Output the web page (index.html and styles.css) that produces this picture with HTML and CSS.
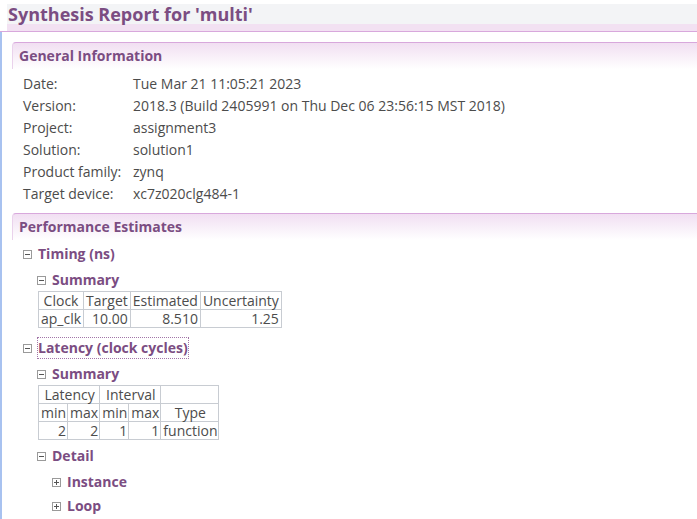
FILE: index.html
```html
<!DOCTYPE html>
<html>
<head>
<meta charset="utf-8">
<link rel="stylesheet" href="styles.css">
</head>
<body>
<div class="titlebar"><h1 class="title">Synthesis Report for 'multi'</h1></div>
<div class="page">
  <h2 class="section first">General Information</h2>
  <div class="info">
    <div class="row"><span class="k">Date:</span><span class="v">Tue Mar 21 11:05:21 2023</span></div>
    <div class="row"><span class="k">Version:</span><span class="v">2018.3 (Build 2405991 on Thu Dec 06 23:56:15 MST 2018)</span></div>
    <div class="row"><span class="k">Project:</span><span class="v">assignment3</span></div>
    <div class="row"><span class="k">Solution:</span><span class="v">solution1</span></div>
    <div class="row"><span class="k">Product family:</span><span class="v">zynq</span></div>
    <div class="row"><span class="k">Target device:</span><span class="v">xc7z020clg484-1</span></div>
  </div>
  <h2 class="section">Performance Estimates</h2>
  <div class="tree l1">
    <div class="node"><span class="tog minus"></span><span class="lbl">Timing (ns)</span></div>
    <div class="tree l2">
      <div class="node"><span class="tog minus"></span><span class="lbl">Summary</span></div>
      <table class="grid">
        <tr><td class="c">Clock</td><td class="c">Target</td><td class="c">Estimated</td><td class="c">Uncertainty</td></tr>
        <tr><td>ap_clk</td><td class="r">10.00</td><td class="r">8.510</td><td class="r">1.25</td></tr>
      </table>
    </div>
    <div class="node n-lat"><span class="tog minus"></span><span class="lbl focus">Latency (clock cycles)</span></div>
    <div class="tree l2">
      <div class="node"><span class="tog minus"></span><span class="lbl">Summary</span></div>
      <table class="grid lat">
        <tr><td class="c" colspan="2">Latency</td><td class="c" colspan="2">Interval</td><td></td></tr>
        <tr><td class="c">min</td><td class="c">max</td><td class="c">min</td><td class="c">max</td><td class="c">Type</td></tr>
        <tr><td class="r">2</td><td class="r">2</td><td class="r">1</td><td class="r">1</td><td>function</td></tr>
      </table>
      <div class="node n-det"><span class="tog minus"></span><span class="lbl">Detail</span></div>
      <div class="tree l3">
        <div class="node n-inst"><span class="tog plus"></span><span class="lbl">Instance</span></div>
        <div class="node n-loop"><span class="tog plus"></span><span class="lbl">Loop</span></div>
      </div>
    </div>
  </div>
</div>
</body>
</html>
```
FILE: styles.css
```css
html, body {
  margin: 0;
  padding: 0;
  background: #ffffff;
  font-family: "Open Sans", "Noto Sans", sans-serif;
  font-size: 14px;
  color: #4c4c4c;
}
.titlebar {
  padding-top: 4px;
  border-bottom: 1px solid #d8a8dc;
}
.title {
  margin: 0 0 0 7px;
  height: 20px;
  line-height: 20px;
  padding-left: 1px;
  background: #f3f4f6;
  color: #7b4d82;
  font-size: 18px;
  font-weight: bold;
  border-bottom: 7px solid #f2e1f2;
}
.page {
  border-left: 2px solid #a8c2f0;
  padding: 10px 0 0 10px;
  min-height: 487px;
  box-sizing: border-box;
}
.section {
  margin: 8px 0 0 0;
  height: 26px;
  line-height: 25px;
  padding-left: 6px;
  border-top: 1px solid #d8a8dc;
  border-left: 1px solid #ead2ec;
  border-top-left-radius: 4px;
  background: linear-gradient(#f1dff2, #ffffff);
  color: #7b4d82;
  font-size: 14px;
  font-weight: bold;
}
.section.first { margin-top: 0; }
.info {
  padding: 4px 0 0 11px;
}
.row {
  display: flex;
  height: 22px;
  line-height: 22px;
}
.k { width: 110px; }
.tree.l1 { padding: 4px 0 0 11px; }
.tree.l2 { padding-left: 14px; }
.tree.l3 { padding-left: 15px; }
.node {
  display: flex;
  align-items: center;
  height: 20px;
  margin-bottom: 6px;
}
.tog {
  width: 7px;
  height: 7px;
  border: 1px solid #9a9a9a;
  margin-right: 6px;
  position: relative;
  flex: none;
}
.tog::before {
  content: "";
  position: absolute;
  left: 1px;
  top: 3px;
  width: 5px;
  height: 1px;
  background: #555;
}
.tog.plus::after {
  content: "";
  position: absolute;
  left: 3px;
  top: 1px;
  width: 1px;
  height: 5px;
  background: #555;
}
.lbl {
  color: #7b4d82;
  font-weight: bold;
  font-size: 14px;
  line-height: 20px;
}
.focus { outline: 1px dotted #a276a8; }
.grid {
  border-collapse: collapse;
  margin: -5px 0 0 1px;
  font-size: 14px;
}
.grid td {
  border: 1px solid #c8ccd2;
  padding: 0 2px;
  height: 17px;
  line-height: 17px;
  white-space: nowrap;
}
.grid.lat td { padding: 0 1px 0 2px; }
.grid td.c { text-align: center; }
.grid td.r { text-align: right; }
.n-lat { margin-top: 10px; }
.n-det { margin-top: 6px; }
.n-inst { margin-top: 3px; margin-bottom: 4px; }
```
